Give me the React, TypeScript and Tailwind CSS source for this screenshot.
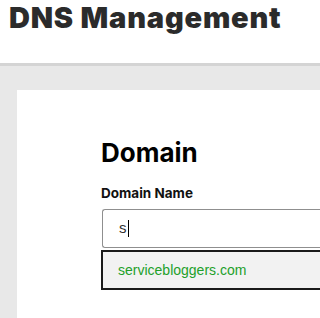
import React from "react";

export default function App() {
  return (
    <div className="w-[320px] h-[318px] overflow-hidden bg-white flex flex-col" style={{ fontFamily: "Inter, 'Liberation Sans', sans-serif" }}>
      <div className="h-[63px] shrink-0 bg-white pl-[9px] pt-[0px]">
        <h1 className="text-[29px] font-black leading-[36px] tracking-[0.8px] text-[#2b2b2b]">DNS Management</h1>
      </div>
      <div className="h-[3px] shrink-0 bg-[#d4d4d4]" />
      <div className="flex-1 bg-[#e8e8e8] pl-[17px] pt-[24px] flex">
        <div className="flex-1 bg-white pl-[84px] pt-[46px]">
          <h2 className="text-[26px] font-bold leading-[34px] text-black">Domain</h2>
          <div className="mt-[15px] text-[13.5px] font-bold leading-[16px] text-[#111]">Domain Name</div>
          <div className="mt-[8px] ml-[1px] h-[39px] border border-[#8f8f8f] border-r-0 rounded-tl-[3px] rounded-bl-[3px] flex items-center pl-[16px]">
            <span className="text-[15px] text-[#333]" style={{ fontFamily: "'Liberation Sans', sans-serif" }}>s</span>
            <span className="w-px h-[17px] bg-black ml-[1px]" />
          </div>
          <div className="mt-[2px] h-[40px] border-2 border-[#1a1a1a] border-r-0 bg-[#f2f2f2] flex items-center pl-[15px]">
            <span className="text-[14px] text-[#22a02a]" style={{ fontFamily: "'Liberation Sans', sans-serif" }}>servicebloggers.com</span>
          </div>
        </div>
      </div>
    </div>
  );
}
